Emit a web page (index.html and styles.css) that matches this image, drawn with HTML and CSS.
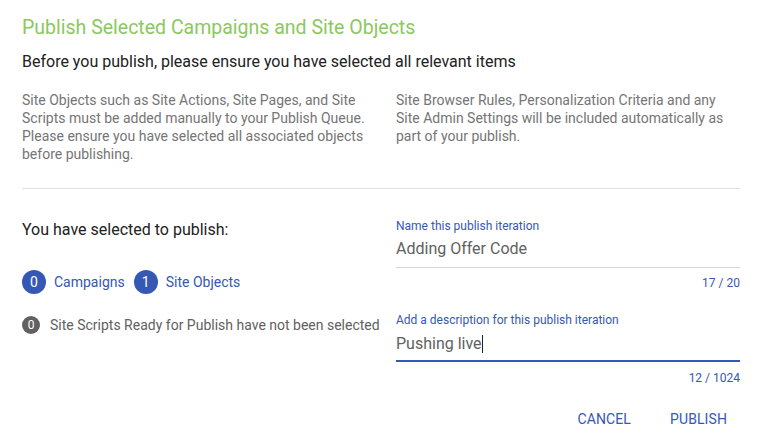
FILE: index.html
```html
<!DOCTYPE html>
<html lang="en">
<head>
    <meta charset="UTF-8">
    <meta name="viewport" content="width=device-width, initial-scale=1.0">
    <title>Publish Selected Campaigns and Site Objects</title>
    <link rel="stylesheet" href="styles.css">
</head>
<body>
    <div class="dialog">
        <h1 class="title">Publish Selected Campaigns and Site Objects</h1>
        <p class="subtitle">Before you publish, please ensure you have selected all relevant items</p>

        <div class="notes">
            <p class="note note-left">Site Objects such as Site Actions, Site Pages, and Site Scripts must be added manually to your Publish Queue. Please ensure you have selected all associated objects before publishing.</p>
            <p class="note">Site Browser Rules, Personalization Criteria and any Site Admin Settings will be included automatically as part of your publish.</p>
        </div>

        <hr class="divider">

        <div class="publish">
            <div class="summary">
                <h2>You have selected to publish:</h2>
                <div class="counts">
                    <span class="badge">0</span>
                    <span class="count-label">Campaigns</span>
                    <span class="badge">1</span>
                    <span class="count-label">Site Objects</span>
                </div>
                <div class="scripts">
                    <span class="badge badge-grey">0</span>
                    <span>Site Scripts Ready for Publish have not been selected</span>
                </div>
            </div>

            <div class="fields">
                <div class="field">
                    <label>Name this publish iteration</label>
                    <div class="value">Adding Offer Code</div>
                    <div class="counter">17 / 20</div>
                </div>
                <div class="field field-focused">
                    <label>Add a description for this publish iteration</label>
                    <div class="value">Pushing live<span class="caret"></span></div>
                    <div class="counter">12 / 1024</div>
                </div>
            </div>
        </div>

        <div class="actions">
            <button class="btn">Cancel</button>
            <button class="btn">Publish</button>
        </div>
    </div>
</body>
</html>
```

FILE: styles.css
```css
body {
    font-family: 'Roboto', 'Liberation Sans', sans-serif;
    margin: 0;
    padding: 0;
    background-color: #ffffff;
    color: #212121;
}

.dialog {
    padding: 16px 23px 0 22px;
}

.title {
    font-size: 19.5px;
    font-weight: 400;
    line-height: 24px;
    color: #8bc860; /* green */
    margin: 0;
}

.subtitle {
    font-size: 16px;
    line-height: 20px;
    margin: 12px 0 0;
    color: #212121;
}

.notes {
    display: grid;
    grid-template-columns: 374px 1fr;
    margin-top: 19px;
}

.note {
    font-size: 14px;
    line-height: 18px;
    color: #757575;
    margin: 0;
}

.note-left {
    padding-right: 16px;
}

.divider {
    border: none;
    border-top: 1px solid #e0e0e0;
    margin: 25px 0 0;
}

.publish {
    display: grid;
    grid-template-columns: 374px 1fr;
    margin-top: 30px;
}

.summary h2 {
    font-size: 16px;
    font-weight: 400;
    line-height: 20px;
    margin: 1px 0 0;
}

.counts {
    display: flex;
    align-items: center;
    margin-top: 30px;
    font-size: 14px;
    color: #3558b5;
}

.badge {
    display: inline-flex;
    align-items: center;
    justify-content: center;
    width: 24px;
    height: 24px;
    border-radius: 50%;
    background-color: #3558b5; /* blue */
    color: white;
    font-size: 14px;
    flex-shrink: 0;
}

.count-label {
    margin: 0 9px 0 8px;
}

.scripts {
    display: flex;
    align-items: center;
    gap: 10px;
    margin-top: 22px;
    font-size: 14px;
    color: #616161;
}

.badge-grey {
    width: 18px;
    height: 18px;
    font-size: 12px;
    background-color: #616161;
}

.field label {
    display: block;
    font-size: 12px;
    line-height: 14px;
    color: #3558b5;
}

.field .value {
    font-size: 16px;
    line-height: 20px;
    color: #616161;
    margin-top: 6px;
    padding-bottom: 8px;
    border-bottom: 1px solid #d6d6d6;
}

.field .counter {
    font-size: 12px;
    line-height: 14px;
    color: #3558b5;
    text-align: right;
    margin-top: 8px;
}

.field-focused {
    margin-top: 23px;
}

.field-focused .value {
    margin-top: 7px;
    padding-bottom: 6px;
    border-bottom: 2px solid #3558b5;
}

.field-focused .counter {
    margin-top: 9px;
}

.caret {
    display: inline-block;
    width: 1px;
    height: 18px;
    background-color: #212121;
    vertical-align: -4px;
}

.actions {
    display: flex;
    justify-content: flex-end;
    gap: 13px;
    margin-top: 16px;
}

.btn {
    font-family: 'Roboto', 'Liberation Sans', sans-serif;
    background: none;
    border: none;
    height: 36px;
    padding: 0 13px;
    font-size: 14px;
    letter-spacing: 0.1px;
    text-transform: uppercase;
    color: #3558b5;
    cursor: pointer;
}
```
